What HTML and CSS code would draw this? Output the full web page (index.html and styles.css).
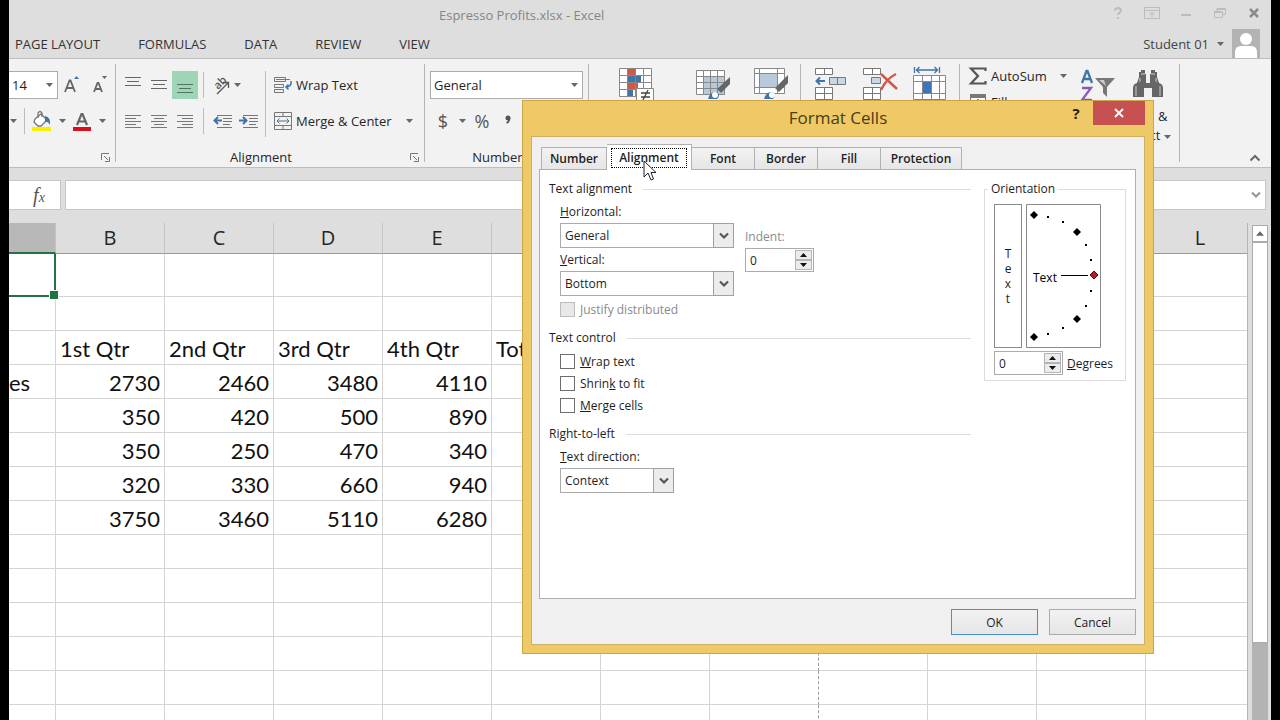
FILE: index.html
```html
<!DOCTYPE html>
<html lang="en">
<head>
  <meta charset="UTF-8">
  <meta name="viewport" content="width=device-width, initial-scale=1">
  <title>Espresso Profits.xlsx - Excel</title>
  <link rel="stylesheet" href="styles.css">
</head>
<body>
  <!-- shared glyphs -->
  <svg class="defs" width="0" height="0" aria-hidden="true">
    <symbol id="drop" viewBox="0 0 7 4"><path d="M0 0h7L3.500 4z" fill="#666"/></symbol>
    <symbol id="chevron" viewBox="0 0 10 8"><path d="M1 1.500l4 4 4-4" fill="none" stroke="currentColor" stroke-width="2.200"/></symbol>
    <symbol id="launcher" viewBox="0 0 9 9"><path d="M.5 7V.5H8M3 3l4 4M8.500 4v4.500H4" fill="none" stroke="#777"/></symbol>
    <symbol id="up" viewBox="0 0 7 4"><path d="M0 4h7L3.500 0z" fill="#111"/></symbol>
    <symbol id="down" viewBox="0 0 7 4"><path d="M0 0h7L3.500 4z" fill="#111"/></symbol>
  </svg>

  <div class="window">
    <header class="titlebar">
      <h1>Espresso Profits.xlsx - Excel</h1>
      <div class="window-buttons">
        <button title="Help"><svg width="16" height="14" viewBox="0 0 16 14"><path d="M5 4.500C5 1 11 1 11 4.500c0 2-3 2.500-3 4.500M8 11v2" fill="none" stroke="#bcbcbc" stroke-width="2"/></svg></button>
        <button title="Ribbon Display Options"><svg width="16" height="14" viewBox="0 0 16 14"><path d="M.5 1.500h15v11H.5zM.5 4.500h15M8 11V6M5.500 8.500L8 6l2.500 2.500" fill="none" stroke="#bcbcbc"/></svg></button>
        <button title="Minimize"><svg width="16" height="14" viewBox="0 0 16 14"><path d="M3 9h10" stroke="#bcbcbc" stroke-width="2"/></svg></button>
        <button title="Restore Down"><svg width="16" height="14" viewBox="0 0 16 14"><path d="M2.500 5.500h8v6h-8zM2.500 6.500h8M5 5V2.500h8.500v6H11M5 3.500h8" fill="none" stroke="#bcbcbc"/></svg></button>
        <button title="Close"><svg width="16" height="14" viewBox="0 0 16 14"><path d="M4 3l8 8M12 3l-8 8" stroke="#8a8a8a" stroke-width="2.500"/></svg></button>
      </div>
    </header>

    <nav class="tabs">
      <a href="#layout">PAGE LAYOUT</a>
      <a href="#formulas">FORMULAS</a>
      <a href="#data">DATA</a>
      <a href="#review">REVIEW</a>
      <a href="#view">VIEW</a>
      <button class="account">Student 01 <svg class="drop"><use href="#drop"/></svg>
        <svg width="28" height="29" viewBox="0 0 28 29"><path d="M0 0h28v29H0z" fill="#b3b3b3"/><circle cx="14" cy="10" r="6" fill="#fff"/><path d="M3 29v-6q0-6 6-6h10q6 0 6 6v6z" fill="#fff"/></svg>
      </button>
    </nav>

    <div class="ribbon">
      <section class="group font-group">
        <div class="row">
          <span class="combo size"><select aria-label="Font size"><option>14</option></select><svg class="drop"><use href="#drop"/></svg></span>
          <button class="grow" title="Increase Font Size"><svg width="18" height="20" viewBox="0 0 18 20"><path d="M2 17L6.500 5.500h1L12 17M4 13h6" fill="none" stroke="#666" stroke-width="1.800"/><path d="M11 4h5l-2.500-3z" fill="#3f74a8"/></svg></button>
          <button class="shrink" title="Decrease Font Size"><svg width="18" height="20" viewBox="0 0 18 20"><path d="M3 17l3.500-9h1l3.500 9M4.500 14h5" fill="none" stroke="#666" stroke-width="1.800"/><path d="M11 1h5l-2.500 3z" fill="#666"/></svg></button>
        </div>
        <div class="row">
          <button class="arrow" title="Borders"><svg class="drop"><use href="#drop"/></svg></button>
          <i class="line"></i>
          <button class="color" title="Fill Color"><svg width="22" height="22" viewBox="0 0 22 22"><path d="M4 9l6-5 6 6-6 6h-3l-4-4z" fill="#fff" stroke="#777" stroke-width="1.300"/><path d="M7 8V3q2-3 4 0v4" fill="none" stroke="#777" stroke-width="1.300"/><path d="M14 6q6 1 5 9-2-4-5-3z" fill="#3f74a8"/><path d="M1 17h19v4H1z" fill="#f7f000"/></svg></button>
          <button class="arrow" title="More fill colors"><svg class="drop"><use href="#drop"/></svg></button>
          <button class="color" title="Font Color"><svg width="20" height="22" viewBox="0 0 20 22"><path d="M5 15L9.500 4h1L15 15M7 11.500h6" fill="none" stroke="#666" stroke-width="2.200"/><path d="M1 17h18v4H1z" fill="#d90f1d"/></svg></button>
          <button class="arrow" title="More font colors"><svg class="drop"><use href="#drop"/></svg></button>
        </div>
        <button class="launcher" title="Font Settings"><svg width="9" height="9"><use href="#launcher"/></svg></button>
      </section>

      <section class="group align-group">
        <div class="columns">
          <div>
            <div class="row">
              <button class="tool" title="Top Align"><svg width="16" height="16" viewBox="0 0 16 16"><path d="M0 .5h16M2 4.500h12M0 8.500h16" stroke="#666"/></svg></button>
              <button class="tool" title="Middle Align"><svg width="16" height="16" viewBox="0 0 16 16"><path d="M0 3.500h16M2 7.500h12M0 11.500h16" stroke="#666"/></svg></button>
              <button class="tool on" title="Bottom Align"><svg width="16" height="16" viewBox="0 0 16 16"><path d="M0 7.500h16M2 11.500h12M0 15.500h16" stroke="#4f7562"/></svg></button>
              <i class="line"></i>
              <button class="orient" title="Orientation"><svg width="22" height="26" viewBox="0 0 22 26"><text transform="translate(9 18) rotate(-45)" font-size="11" font-weight="600" fill="#555">ab</text><path d="M8 22l11-11M14 10.500h5.500V16" fill="none" stroke="#555" stroke-width="1.300"/></svg> <svg class="drop"><use href="#drop"/></svg></button>
            </div>
            <div class="row">
              <button class="tool" title="Align Left"><svg width="16" height="14" viewBox="0 0 16 14"><path d="M0 1.500h16M0 4.500h11M0 7.500h16M0 10.500h11M0 13.500h16" stroke="#777"/></svg></button>
              <button class="tool" title="Center"><svg width="16" height="14" viewBox="0 0 16 14"><path d="M0 1.500h16M3 4.500h10M0 7.500h16M3 10.500h10M0 13.500h16" stroke="#777"/></svg></button>
              <button class="tool" title="Align Right"><svg width="16" height="14" viewBox="0 0 16 14"><path d="M0 1.500h16M5 4.500h11M0 7.500h16M5 10.500h11M0 13.500h16" stroke="#777"/></svg></button>
              <i class="line"></i>
              <button class="tool" title="Decrease Indent"><svg width="19" height="14" viewBox="0 0 19 14"><path d="M4 1.500h15M10 4.500h9M10 7.500h9M10 10.500h7M4 13.500h15" stroke="#777"/><path d="M1 6.500h8M5 3L1.500 6.500 5 10" fill="none" stroke="#3f74a8" stroke-width="2"/></svg></button>
              <button class="tool" title="Increase Indent"><svg width="19" height="14" viewBox="0 0 19 14"><path d="M4 1.500h15M10 4.500h9M10 7.500h9M10 10.500h7M4 13.500h15" stroke="#777"/><path d="M0 6.500h8M4 3l3.500 3.500L4 10" fill="none" stroke="#3f74a8" stroke-width="2"/></svg></button>
            </div>
          </div>
          <div class="wrap-tools">
            <button class="labelled"><svg width="18" height="18" viewBox="0 0 18 18"><path d="M.5 1.500h11v4H.5zM.5 8.500h9v3h-9zM.5 13.500h9v3h-9zM2 3.500h14" fill="none" stroke="#777"/><path d="M17 5q1 6-5 6M14.500 8.500L12 11l2.500 2.500" fill="none" stroke="#3f74a8" stroke-width="1.500"/></svg> Wrap Text</button>
            <button class="labelled"><svg width="18" height="18" viewBox="0 0 18 18"><path d="M.5.5h17v17H.5zM.5 4.500h17M.5 13.500h17M9 0v4M9 14v4" fill="none" stroke="#777"/><path d="M3 9h12M5.500 6.500L3 9l2.500 2.500M12.500 6.500L15 9l-2.500 2.500" fill="none" stroke="#55708c"/></svg> Merge &amp; Center <svg class="drop"><use href="#drop"/></svg></button>
          </div>
        </div>
        <h2>Alignment</h2>
        <button class="launcher" title="Alignment Settings"><svg width="9" height="9"><use href="#launcher"/></svg></button>
      </section>

      <section class="group number-group">
        <div class="row">
          <span class="combo format"><select aria-label="Number format"><option>General</option></select><svg class="drop"><use href="#drop"/></svg></span>
        </div>
        <div class="row">
          <button class="glyph" title="Accounting Number Format">$</button>
          <button class="arrow" title="More accounting formats"><svg class="drop"><use href="#drop"/></svg></button>
          <button class="glyph percent" title="Percent Style">%</button>
          <button class="glyph" title="Comma Style"><svg width="8" height="12" viewBox="0 0 8 12"><circle cx="4" cy="3" r="2.500" fill="#555"/><path d="M5.500 3q0 4-3 5" fill="none" stroke="#555" stroke-width="1.800"/></svg></button>
        </div>
        <h2>Number</h2>
      </section>

      <section class="group big-group styles-group">
        <button title="Conditional Formatting"><svg width="36" height="34" viewBox="0 0 36 34"><path d="M.5.500h32v28H.5z" fill="#fff"/><path d="M8 0h8v7H8zM8 15h11v7H8z" fill="#cc5a48"/><path d="M8 7h14v7H8zM8 22h6v7H8z" fill="#3f74a8"/><path d="M.5.500h32v28H.5zM0 7.500h33M0 14.500h33M0 21.500h33M8.500 0v29M16.500 0v29M24.500 0v29" fill="none" stroke="#888"/><path d="M17.500 20.500h17v14h-17z" fill="#fff" stroke="#888"/><path d="M22 25h9M22 29h9M29 22l-5 10" stroke="#444" stroke-width="1.300"/></svg></button>
        <button title="Format as Table"><svg width="36" height="34" viewBox="0 0 36 34"><path d="M.5 2.500h28v24H.5z" fill="#fff"/><path d="M8 9h21v18H8z" fill="#b7cadc"/><path d="M.5 2.500h28v24H.5zM0 8.500h29M0 14.500h29M0 20.500h29M7.500 2v25M14.500 2v25M21.500 2v25" fill="none" stroke="#888"/><path d="M34 9v7l-9 9-4-4z" fill="#666"/><path d="M12 31q2-8 9-7 4 3 0 7z" fill="#3f74a8"/><circle cx="19" cy="27" r="3" fill="#fff"/></svg></button>
        <button title="Cell Styles"><svg width="36" height="34" viewBox="0 0 36 34"><path d="M.5.500h30v25H.5z" fill="#fff"/><path d="M6 6h17v13H6z" fill="#b7cadc"/><path d="M.5.500h30v25H.5zM0 5.500h31M0 19.500h31M5.500 0v26M23.500 0v26" fill="none" stroke="#888"/><path d="M34 7v8l-9 9-4-4z" fill="#666"/><path d="M10 31q2-8 9-7 4 3 0 7z" fill="#3f74a8"/><circle cx="18" cy="27" r="3" fill="#fff"/></svg></button>
      </section>

      <section class="group big-group cells-group">
        <button title="Insert"><svg width="34" height="34" viewBox="0 0 34 34"><path d="M.5.500h17v6H.5zM9.500 0v7M.5 19.500h17v12H.5zM0 25.500h18M9.500 19v12" fill="#fff" stroke="#777"/><path d="M14.500 9.500h16v7h-16zM22.500 9v8" fill="#c9d6e3" stroke="#777"/><path d="M1 13h9M5 9.500L1.500 13 5 16.500" fill="none" stroke="#3f74a8" stroke-width="2"/></svg></button>
        <button title="Delete"><svg width="36" height="34" viewBox="0 0 36 34"><path d="M.5.500h17v6H.5zM9.500 0v7M.5 19.500h17v12H.5zM0 25.500h18M9.500 19v12" fill="#fff" stroke="#777"/><path d="M8.500 9.500h9v6h-9z" fill="#c9d6e3" stroke="#777"/><path d="M18 6l16 15M33 6q-10 5-15 16" fill="none" stroke="#cf5a4a" stroke-width="2.500"/></svg></button>
        <button title="Format"><svg width="34" height="34" viewBox="0 0 34 34"><path d="M.5 7.500h32v24H.5z" fill="#fff"/><path d="M10 14h8v11h-8z" fill="#3f74b8"/><path d="M.5 7.500h32v24H.5zM0 13.500h33M0 25.500h33M9.500 7v25M18.500 7v25M26.500 7v25" fill="none" stroke="#888"/><path d="M1.500-1v6M26.500-1v6M3 2h22M6.500-1L3.500 2l3 3M21.500-1l3 3-3 3" fill="none" stroke="#3f74a8" stroke-width="1.300"/></svg></button>
      </section>

      <section class="group editing-group">
        <div class="sum-tools">
          <button><svg width="18" height="18" viewBox="0 0 18 18"><path d="M16.500 4V1.500H2L9 9l-7 7.500h14.500V14" fill="none" stroke="#555" stroke-width="2.200"/></svg> AutoSum <svg class="drop"><use href="#drop"/></svg></button>
          <button><svg width="18" height="16" viewBox="0 0 18 16"><path d="M1.500.500h15v15h-15z" fill="#fff" stroke="#777"/><path d="M1 0h16v4H1z" fill="#777"/><path d="M9 5v8M6 10l3 3 3-3" fill="none" stroke="#3f74a8" stroke-width="1.500"/></svg> Fill</button>
        </div>
        <button class="find" title="Sort &amp; Filter"><svg width="36" height="38" viewBox="0 0 36 38"><path d="M2 14L6.500 2h1L12 14M4 10h6" fill="none" stroke="#3f74a8" stroke-width="2.300"/><path d="M2 19h9L2 31h10" fill="none" stroke="#8a5bb5" stroke-width="2.300"/><path d="M15 9h20l-8 9v10l-4-4v-6z" fill="#777"/><path d="M19 11h5l2 6z" fill="#ccc"/></svg></button>
        <button class="find"><svg width="32" height="38" viewBox="0 0 32 38"><path d="M7 3h2V1h4v4h1v9h4V5h1V1h4v2h2v5l2 6q4 1 4 5v9H20v-9h-8v9H1v-9q0-4 4-5l2-6z" fill="#666"/><path d="M4 17v10M28 17v10M8 9v4M24 9v4M9 5h4M19 5h4" stroke="#ccc"/></svg><span>Find &amp;</span><span>Select <svg class="drop"><use href="#drop"/></svg></span></button>
      </section>
      <button class="collapse" title="Collapse the Ribbon"><svg width="12" height="8" viewBox="0 0 12 8"><path d="M1.500 6.500L6 2l4.500 4.500" fill="none" stroke="#666" stroke-width="2"/></svg></button>
    </div>

    <div class="formula-bar">
      <button title="Insert Function"><em>f</em><small>x</small></button>
      <div class="formula"><input type="text" aria-label="Formula"><svg width="10" height="8"><use href="#chevron"/></svg></div>
    </div>

    <main class="sheet">
      <div class="cells">
        <table>
          <colgroup><col class="first"><col><col><col><col><col><col><col><col><col><col><col class="last"></colgroup>
          <thead>
            <tr><th class="selected"></th><th>B</th><th>C</th><th>D</th><th>E</th><th></th><th></th><th></th><th></th><th></th><th></th><th>L</th></tr>
          </thead>
          <tbody>
            <tr class="tall"><td class="active"></td><td></td><td></td><td></td><td></td><td></td><td></td><td></td><td></td><td></td><td></td><td></td></tr>
            <tr><td></td><td></td><td></td><td></td><td></td><td></td><td></td><td></td><td></td><td></td><td></td><td></td></tr>
            <tr class="names"><td></td><td>1st Qtr</td><td>2nd Qtr</td><td>3rd Qtr</td><td>4th Qtr</td><td>Total</td><td></td><td></td><td></td><td></td><td></td><td></td></tr>
            <tr><td>es</td><td>2730</td><td>2460</td><td>3480</td><td>4110</td><td></td><td></td><td></td><td></td><td></td><td></td><td></td></tr>
            <tr><td></td><td>350</td><td>420</td><td>500</td><td>890</td><td></td><td></td><td></td><td></td><td></td><td></td><td></td></tr>
            <tr><td></td><td>350</td><td>250</td><td>470</td><td>340</td><td></td><td></td><td></td><td></td><td></td><td></td><td></td></tr>
            <tr><td></td><td>320</td><td>330</td><td>660</td><td>940</td><td></td><td></td><td></td><td></td><td></td><td></td><td></td></tr>
            <tr><td></td><td>3750</td><td>3460</td><td>5110</td><td>6280</td><td></td><td></td><td></td><td></td><td></td><td></td><td></td></tr>
            <tr><td></td><td></td><td></td><td></td><td></td><td></td><td></td><td></td><td></td><td></td><td></td><td></td></tr>
            <tr><td></td><td></td><td></td><td></td><td></td><td></td><td></td><td></td><td></td><td></td><td></td><td></td></tr>
            <tr><td></td><td></td><td></td><td></td><td></td><td></td><td></td><td></td><td></td><td></td><td></td><td></td></tr>
            <tr><td></td><td></td><td></td><td></td><td></td><td></td><td></td><td></td><td></td><td></td><td></td><td></td></tr>
            <tr><td></td><td></td><td></td><td></td><td></td><td></td><td></td><td></td><td></td><td></td><td></td><td></td></tr>
            <tr><td></td><td></td><td></td><td></td><td></td><td></td><td></td><td></td><td></td><td></td><td></td><td></td></tr>
          </tbody>
        </table>
      </div>
      <div class="scrollbar">
        <button title="Scroll up"><svg width="8" height="5" viewBox="0 0 7 4"><path d="M0 4h7L3.500 0z" fill="#666"/></svg></button>
        <div class="thumb"></div>
        <div class="track"></div>
      </div>
    </main>

    <form class="dialog" role="dialog" aria-label="Format Cells" onsubmit="return false">
      <div class="dialog-title">
        <h2>Format Cells</h2>
        <div class="dialog-buttons">
          <button type="button" class="help" title="Help">?</button>
          <button type="button" class="close" title="Close"><svg width="10" height="10" viewBox="0 0 10 10"><path d="M1 1l8 8M9 1L1 9" stroke="#fff" stroke-width="1.800"/></svg></button>
        </div>
      </div>
      <div class="client">
        <div class="dialog-tabs">
          <button type="button">Number</button>
          <button type="button" class="current"><span>Alignment</span></button>
          <button type="button">Font</button>
          <button type="button">Border</button>
          <button type="button">Fill</button>
          <button type="button" class="wide">Protection</button>
        </div>
        <div class="panel">
          <div class="settings">
            <h3>Text alignment</h3>
            <div class="fields">
              <div>
                <label for="horizontal"><u>H</u>orizontal:</label>
                <span class="combo"><select id="horizontal"><option>General</option></select><b><svg width="10" height="8"><use href="#chevron"/></svg></b></span>
                <label for="vertical"><u>V</u>ertical:</label>
                <span class="combo"><select id="vertical"><option>Bottom</option></select><b><svg width="10" height="8"><use href="#chevron"/></svg></b></span>
              </div>
              <div class="indent">
                <label for="indent">Indent:</label>
                <span class="spinner"><input id="indent" type="text" value="0"><span><button type="button" title="Increase"><svg width="7" height="4"><use href="#up"/></svg></button><button type="button" title="Decrease"><svg width="7" height="4"><use href="#down"/></svg></button></span></span>
              </div>
            </div>
            <label class="check disabled"><input type="checkbox" disabled> Justify distributed</label>
            <h3>Text control</h3>
            <label class="check"><input type="checkbox"> <span><u>W</u>rap text</span></label>
            <label class="check"><input type="checkbox"> <span>Shrin<u>k</u> to fit</span></label>
            <label class="check"><input type="checkbox"> <span><u>M</u>erge cells</span></label>
            <h3>Right-to-left</h3>
            <div class="fields">
              <div>
                <label for="direction"><u>T</u>ext direction:</label>
                <span class="combo narrow"><select id="direction"><option>Context</option></select><b><svg width="10" height="8"><use href="#chevron"/></svg></b></span>
              </div>
            </div>
          </div>
          <fieldset>
            <legend>Orientation</legend>
            <div class="dials">
              <button type="button" class="stacked" aria-label="Vertical text"><span>T</span><span>e</span><span>x</span><span>t</span></button>
              <svg class="dial" width="75" height="144" viewBox="0 0 75 144">
                <path d="M.5.500h74v143H.5z" fill="#fff" stroke="#8a8a8a"/>
                <path d="M8 7l4 4-4 4-4-4zM51 24l4 4-4 4-4-4zM51 111l4 4-4 4-4-4zM8 129l4 4-4 4-4-4z" fill="#000"/>
                <path d="M68 67l4 4-4 4-4-4z" fill="#b01c2e" stroke="#600"/>
                <path d="M21 12h2v2h-2zM36 17h2v2h-2zM59 40h2v2h-2zM64 55h2v2h-2zM64 86h2v2h-2zM59 101h2v2h-2zM36 123h2v2h-2zM21 129h2v2h-2z" fill="#000"/>
                <path d="M35 71.500h27" stroke="#000"/>
                <text x="7" y="78" font-size="12">Text</text>
              </svg>
            </div>
            <div class="degrees">
              <span class="spinner"><input id="degrees" type="text" value="0"><span><button type="button" title="Increase"><svg width="7" height="4"><use href="#up"/></svg></button><button type="button" title="Decrease"><svg width="7" height="4"><use href="#down"/></svg></button></span></span>
              <label for="degrees"><u>D</u>egrees</label>
            </div>
          </fieldset>
        </div>
        <div class="actions">
          <button class="default">OK</button>
          <button type="button">Cancel</button>
        </div>
      </div>
      <svg class="pointer" width="14" height="21" viewBox="0 0 14 21"><path d="M1 1v16l4-4 3 7 2.500-1L8 12.500h5z" fill="#fff" stroke="#222"/></svg>
    </form>
  </div>
</body>
</html>
```
FILE: styles.css
```css
* {
  box-sizing: border-box;
}

body {
  background: #000;
  color: #262626;
  font-family: "Open Sans", sans-serif;
  font-size: 13px;
  margin: 0;
  padding: 0 9px;
}

h1, h2, h3 {
  font-weight: normal;
  margin: 0;
}

button, input, select {
  background: none;
  border: none;
  border-radius: 0;
  color: inherit;
  font: inherit;
  margin: 0;
  padding: 0;
}

svg {
  display: block;
  flex: none;
  overflow: visible;
}

.defs {
  position: absolute;
}

.drop {
  height: 4px;
  width: 7px;
}

.window {
  background: #dedede;
  display: flex;
  flex-direction: column;
  height: 100vh;
  overflow: hidden;
  position: relative;
}

/* title bar and ribbon tabs */
.titlebar {
  align-items: center;
  display: flex;
  height: 29px;
  justify-content: space-between;
  padding-left: 430px;
}

.titlebar h1 {
  color: #858585;
  font-size: 13px;
}

.window-buttons {
  display: flex;
  gap: 18px;
  padding: 0 9px 3px 0;
}

.tabs {
  align-items: center;
  display: flex;
  gap: 38px;
  height: 29px;
  padding: 0 11px 0 6px;
}

.tabs a {
  color: #333;
  text-decoration: none;
}

.account {
  align-items: center;
  color: #444;
  display: flex;
  gap: 8px;
  margin-left: auto;
}

/* ribbon */
.ribbon {
  background: #f2f2f2;
  border-bottom: 1px solid #bdbdbd;
  border-top: 1px solid #bdbdbd;
  display: flex;
  flex: none;
  height: 110px;
  padding: 5px 0;
}

.group {
  border-right: 1px solid #b5b5b5;
  flex: none;
  padding-top: 7px;
  position: relative;
}

.group h2 {
  bottom: 0;
  font-size: 13px;
  left: 0;
  line-height: 10px;
  position: absolute;
  right: 18px;
  text-align: center;
}

.row {
  align-items: center;
  display: flex;
  height: 28px;
  margin-bottom: 8px;
}

.ribbon button {
  align-items: center;
  display: flex;
  justify-content: center;
}

.line {
  border-left: 1px solid #bdbdbd;
  height: 26px;
  margin: 0 5px;
}

.ribbon .launcher {
  bottom: 0;
  position: absolute;
  right: 5px;
}

.combo {
  display: block;
  position: relative;
}

.combo select {
  appearance: none;
  background: #fff;
  border: 1px solid #ababab;
  color: #1e1e1e;
  height: 28px;
  width: 100%;
}

.ribbon .combo .drop {
  pointer-events: none;
  position: absolute;
  right: 5px;
  top: 12px;
}

.font-group {
  width: 107px;
}

.size {
  width: 49px;
}

.size select {
  border-left: none;
  padding-left: 3px;
}

.grow, .shrink {
  width: 28px;
}

.arrow {
  width: 12px;
}

.font-group .arrow:first-child {
  width: 8px;
}

.font-group .line {
  margin: 0 3px 0 7px;
}

.color {
  width: 28px;
}

.align-group {
  padding-left: 4px;
  width: 309px;
}

.columns {
  display: flex;
}

.tool {
  height: 28px;
  width: 26px;
}

.on {
  background: #9fd5b7;
}

.orient {
  gap: 3px;
}

.wrap-tools {
  border-left: 1px solid #bdbdbd;
  height: 66px;
  margin-left: 4px;
  padding-left: 8px;
}

.labelled {
  gap: 4px;
  height: 28px;
  margin-bottom: 8px;
}

.labelled .drop {
  margin-left: 10px;
}

.number-group {
  padding-left: 5px;
  width: 164px;
}

.format {
  width: 153px;
}

.format select {
  padding-left: 3px;
}

.glyph {
  color: #555;
  font-size: 18px;
  width: 26px;
}

.percent {
  margin-left: 1px;
}

.big-group {
  align-items: flex-start;
  display: flex;
  padding-top: 4px;
}

.styles-group {
  gap: 22px;
  padding-left: 30px;
  width: 212px;
}

.styles-group button:first-child {
  margin-right: 19px;
}

.cells-group {
  gap: 14px;
  padding-left: 14px;
  width: 159px;
}

.editing-group {
  align-items: flex-start;
  display: flex;
  padding: 3px 0 0 9px;
  width: 220px;
}

.sum-tools {
  width: 104px;
}

.sum-tools button {
  gap: 4px;
  height: 18px;
  margin-bottom: 8px;
}

.sum-tools .drop {
  margin-left: 9px;
}

.ribbon .find {
  flex-direction: column;
  line-height: 19px;
  padding-top: 2px;
  width: 50px;
}

.find span {
  align-items: center;
  display: flex;
  gap: 4px;
}

.find .drop {
  margin-top: 2px;
}

.ribbon .collapse {
  align-self: flex-end;
  margin: 0 10px 0 auto;
}

/* formula bar */
.formula-bar {
  display: flex;
  flex: none;
  gap: 4px;
  height: 55px;
  padding: 12px 5px 13px 0;
}

.formula-bar button {
  background: #fff;
  border: 1px solid #c6c6c6;
  border-left: none;
  color: #555;
  font-family: "Liberation Serif", serif;
  font-size: 20px;
  font-style: italic;
  padding-left: 9px;
  width: 52px;
}

.formula-bar small {
  font-size: 14px;
}

.formula {
  align-items: center;
  background: #fff;
  border: 1px solid #c6c6c6;
  color: #999;
  display: flex;
  flex: 1;
  padding-right: 4px;
}

.formula input {
  flex: 1;
}

/* worksheet */
.sheet {
  display: flex;
  flex: 1;
  min-height: 0;
}

.cells {
  border-right: 1px solid #b5b5b5;
  flex: 1;
  overflow: hidden;
}

/* the last column runs on under the scrollbar */
table {
  border-collapse: separate;
  border-spacing: 0;
  table-layout: fixed;
  width: calc(100% + 8px);
}

col {
  width: 109px;
}

.first {
  width: 47px;
}

.last {
  width: auto;
}

th {
  border-bottom: 1px solid #9b9b9b;
  border-right: 1px solid #c4c4c4;
  font-size: 20px;
  font-weight: normal;
  height: 31px;
  line-height: 28px;
  padding: 0;
}

th.selected {
  background: #b8b8b8;
  border-bottom: 2px solid #217346;
}

td {
  background: #fff;
  border-bottom: 1px solid #d4d4d4;
  border-right: 1px solid #d4d4d4;
  color: #111;
  font-family: Lato, sans-serif;
  font-size: 22px;
  height: 34px;
  line-height: 31px;
  padding: 2px 4px 0;
  text-align: right;
  white-space: nowrap;
}

td:first-child {
  padding-left: 0;
  padding-right: 0;
  text-align: left;
}

td:nth-child(8) {
  border-right: 1px dashed #999;
}

.names td {
  text-align: left;
}

.tall td {
  height: 43px;
}

td.active {
  border-bottom: 2px solid #217346;
  border-right: 2px solid #217346;
  position: relative;
}

.active::after {
  background: #217346;
  border: 1px solid #fff;
  bottom: -5px;
  content: "";
  height: 8px;
  position: absolute;
  right: -5px;
  width: 8px;
}

.scrollbar {
  display: flex;
  flex-direction: column;
  padding: 2px 3px 0 4px;
  width: 23px;
}

.scrollbar button {
  align-items: center;
  background: #fff;
  border: 1px solid #ababab;
  display: flex;
  flex: none;
  height: 17px;
  justify-content: center;
}

.thumb {
  background: #fff;
  border: 1px solid #ababab;
  flex: 401;
}

.track {
  background: #b3b3b3;
  flex: 77;
}

/* format cells window */
.dialog {
  background: #efc966;
  border: 1px solid #c9a54b;
  color: #1e1e1e;
  font-size: 12px;
  left: 513px;
  padding: 0 8px 8px;
  position: absolute;
  top: 100px;
  width: 632px;
}

.dialog-title {
  display: grid;
  grid-template-columns: 1fr auto 1fr;
  height: 35px;
}

.dialog-title h2 {
  color: #4a3c17;
  font-size: 17px;
  grid-column: 2;
  line-height: 34px;
}

.dialog-buttons {
  align-items: flex-start;
  display: flex;
  justify-content: flex-end;
}

.help {
  font-size: 15px;
  font-weight: bold;
  height: 24px;
  width: 34px;
}

.close {
  background: #c75050;
  display: grid;
  height: 24px;
  place-items: center;
  width: 52px;
}

.client {
  background: #f0f0f0;
  border: 1px solid #cdb068;
  padding: 7px 8px 9px 7px;
}

.dialog-tabs {
  align-items: flex-end;
  display: flex;
  padding: 0 2px;
}

.dialog-tabs button {
  background: linear-gradient(#f2f2f2, #e6e6e6);
  border: 1px solid #b0b0b0;
  border-bottom: none;
  border-left-width: 0;
  font-weight: 600;
  height: 22px;
  width: 63px;
}

.dialog-tabs button:first-child {
  border-left-width: 1px;
  width: 66px;
}

.dialog-tabs .wide {
  width: 81px;
}

.dialog-tabs .current {
  background: #fff;
  height: 26px;
  margin-bottom: -1px;
  padding: 0 4px;
  width: 85px;
}

.current span {
  border: 1px dotted #000;
  display: block;
  line-height: 18px;
}

.panel {
  align-items: flex-start;
  background: #fff;
  border: 1px solid #b0b0b0;
  display: flex;
  gap: 13px;
  height: 430px;
  padding: 10px 9px;
}

.settings {
  flex: 1;
}

h3 {
  align-items: center;
  display: flex;
  font-size: 12px;
  gap: 11px;
  line-height: 18px;
  margin: 9px 0 3px;
}

h3:first-child {
  margin-top: 0;
}

h3::after {
  border-top: 1px solid #dcdcdc;
  content: "";
  flex: 1;
}

.fields {
  display: flex;
  gap: 11px;
  padding-left: 11px;
}

.fields label {
  display: block;
  line-height: 22px;
}

.fields .combo {
  margin-bottom: 1px;
  width: 174px;
}

.fields .combo select {
  font-size: 12px;
  height: 25px;
  padding-left: 4px;
}

.fields .narrow {
  width: 114px;
}

.combo b {
  background: #ececec;
  border: 1px solid #a0a0a0;
  color: #555;
  display: grid;
  height: 25px;
  place-items: center;
  pointer-events: none;
  position: absolute;
  right: 0;
  top: 0;
  width: 21px;
}

.indent {
  padding-top: 25px;
}

.indent label, .disabled {
  color: #8a8a8a;
}

.check {
  align-items: center;
  display: flex;
  gap: 5px;
  height: 22px;
  margin-left: 11px;
}

.check.disabled {
  margin-top: 1px;
}

.check input {
  appearance: none;
  background: #fff;
  border: 1px solid #6e6e6e;
  height: 15px;
  width: 15px;
}

.check input:disabled {
  background: #e8e8e8;
  border-color: #bdbdbd;
}

.spinner {
  border: 1px solid #ababab;
  display: flex;
  height: 24px;
  width: 69px;
}

.spinner input {
  flex: 1;
  min-width: 0;
  padding-left: 4px;
}

.spinner span {
  display: flex;
  flex-direction: column;
  padding: 1px;
  width: 19px;
}

.spinner button {
  background: #ececec;
  border: 1px solid #b5b5b5;
  display: grid;
  flex: 1;
  place-items: center;
}

fieldset {
  border: 1px solid #dcdcdc;
  margin: 0;
  padding: 6px 8px 5px 9px;
  width: 142px;
}

legend {
  line-height: 18px;
  margin-left: -6px;
  padding: 0 3px;
}

.dials {
  display: flex;
  gap: 4px;
}

.stacked {
  align-items: center;
  border: 1px solid #8a8a8a;
  display: flex;
  flex-direction: column;
  justify-content: center;
  line-height: 15px;
  width: 28px;
}

.degrees {
  align-items: center;
  display: flex;
  gap: 4px;
  margin-top: 3px;
}

.actions {
  display: flex;
  gap: 11px;
  justify-content: flex-end;
  margin-top: 10px;
}

.actions button {
  background: linear-gradient(#f2f2f2, #e6e6e6);
  border: 1px solid #ababab;
  height: 26px;
  width: 87px;
}

.actions .default {
  border-color: #4a90d0;
}

.pointer {
  left: 120px;
  position: absolute;
  top: 59px;
}
```
